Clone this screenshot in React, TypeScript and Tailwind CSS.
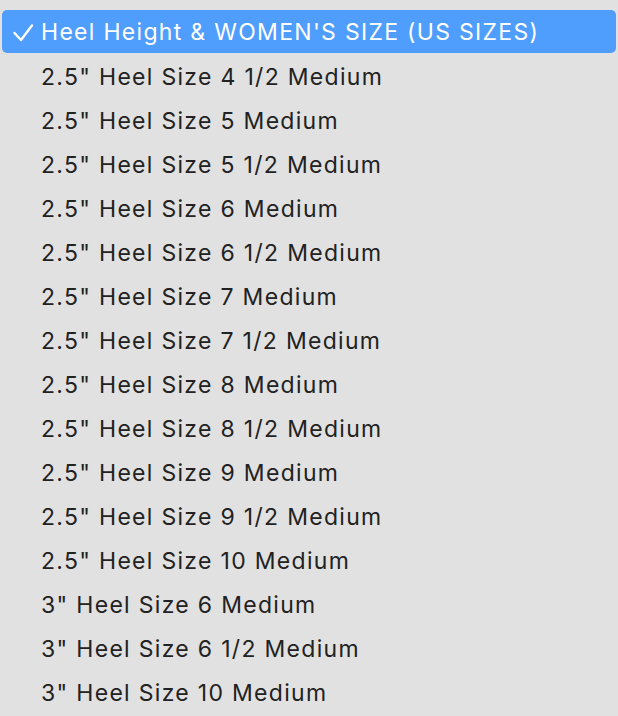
import React from 'react';

const options = [
  '2.5" Heel Size 4 1/2 Medium',
  '2.5" Heel Size 5 Medium',
  '2.5" Heel Size 5 1/2 Medium',
  '2.5" Heel Size 6 Medium',
  '2.5" Heel Size 6 1/2 Medium',
  '2.5" Heel Size 7 Medium',
  '2.5" Heel Size 7 1/2 Medium',
  '2.5" Heel Size 8 Medium',
  '2.5" Heel Size 8 1/2 Medium',
  '2.5" Heel Size 9 Medium',
  '2.5" Heel Size 9 1/2 Medium',
  '2.5" Heel Size 10 Medium',
  '3" Heel Size 6 Medium',
  '3" Heel Size 6 1/2 Medium',
  '3" Heel Size 10 Medium',
];

export default function App() {
  return (
    <div className="w-[618px] h-[716px] overflow-hidden bg-[#e1e1e1] pt-[10px] font-['Inter','Liberation_Sans',sans-serif] text-[23px] tracking-[1.3px] text-[#222222]">
      <div className="mx-[2px] h-[43px] pt-[2px] rounded-[5px] bg-[#4f9dfd] text-white flex items-center">
        <svg width="39" height="41" viewBox="0 0 39 41" className="shrink-0">
          <path d="M12.5 21 L19 28 L30 13.5" fill="none" stroke="#fff" strokeWidth="2.4" strokeLinecap="round" strokeLinejoin="round" />
        </svg>
        <span>Heel Height &amp; WOMEN'S SIZE (US SIZES)</span>
      </div>
      {options.map((o) => (
        <div key={o} className="h-[44px] pt-[4px] flex items-center pl-[41px]">
          {o}
        </div>
      ))}
    </div>
  );
}
